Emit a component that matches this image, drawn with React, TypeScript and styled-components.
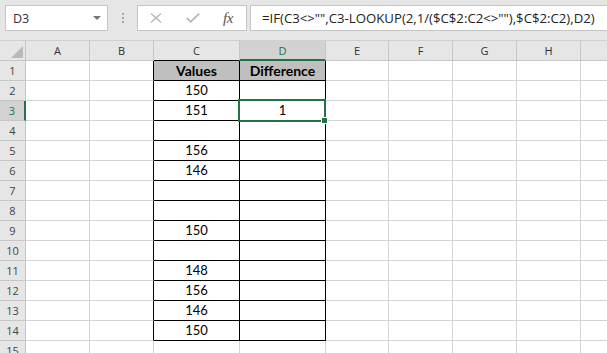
import React from 'react';
import styled, { createGlobalStyle } from 'styled-components';

const GlobalStyle = createGlobalStyle`
  html, body { margin: 0; padding: 0; background: #ffffff; overflow: hidden; }
  body { font-family: "Open Sans", sans-serif; }
`;

const GREEN = '#217346';
const GRID = '#d4d4d4';
const HEAD_LINE = '#c6c6c6';

const Page = styled.div`
  width: 607px;
  height: 353px;
  overflow: hidden;
  display: flex;
  flex-direction: column;
`;

const Toolbar = styled.div`
  box-sizing: border-box;
  flex: none;
  height: 41px;
  background: #e6e6e6;
  border-bottom: 1px solid #d0d0d0;
  display: flex;
  align-items: flex-start;
  padding: 5px 0 0 5px;
`;

const NameBox = styled.div`
  box-sizing: border-box;
  flex: none;
  width: 103px;
  height: 26px;
  background: #fff;
  border: 1px solid ${HEAD_LINE};
  display: flex;
  align-items: center;
  justify-content: space-between;
  padding: 0 6px 0 7px;
  font: 400 12.5px "Open Sans", sans-serif;
  color: #333;
`;

const Dots = styled.div`
  flex: none;
  width: 29px;
  height: 26px;
  display: flex;
  flex-direction: column;
  align-items: center;
  justify-content: center;
  gap: 2px;
`;

const Dot = styled.span`
  width: 2px;
  height: 2px;
  background: #a8a8a8;
`;

const ButtonsBox = styled.div`
  box-sizing: border-box;
  flex: none;
  width: 110px;
  height: 26px;
  background: #fff;
  border: 1px solid ${HEAD_LINE};
  display: flex;
  align-items: center;
  padding-left: 12px;
`;

const IconSlot = styled.span<{ $gap: number }>`
  display: flex;
  align-items: center;
  margin-right: ${(p) => p.$gap}px;
`;

const Fx = styled.span`
  font: italic 15px "Liberation Serif", serif;
  color: #555;
  letter-spacing: -0.5px;
  line-height: 1;
`;

const FormulaBox = styled.div`
  box-sizing: border-box;
  flex: 1;
  height: 26px;
  margin-left: 3px;
  margin-right: -3px;
  background: #fff;
  border: 1px solid ${HEAD_LINE};
  display: flex;
  align-items: center;
  padding-left: 11px;
  font: 400 13.2px "Open Sans", sans-serif;
  color: #222;
  white-space: nowrap;
  overflow: hidden;
`;

const Sheet = styled.div`
  display: grid;
  grid-template-columns: 26px 64px 64px 86px 86px 63px 64px 64px 64px 64px;
  grid-auto-rows: 20px;
`;

const Corner = styled.div`
  box-sizing: border-box;
  background: #e6e6e6;
  border-right: 1px solid ${HEAD_LINE};
  border-bottom: 1px solid ${HEAD_LINE};
  display: flex;
  justify-content: flex-end;
  align-items: flex-end;
  padding: 0 2px 2px 0;
`;

const ColHeader = styled.div<{ $sel?: boolean; $bottom?: string }>`
  box-sizing: border-box;
  background: ${(p) => (p.$sel ? '#d2d2d2' : '#e6e6e6')};
  border-right: 1px solid ${HEAD_LINE};
  border-bottom: ${(p) => (p.$sel ? `2px solid ${GREEN}` : `1px solid ${p.$bottom || HEAD_LINE}`)};
  color: ${(p) => (p.$sel ? GREEN : '#333')};
  font: 400 11px "Open Sans", sans-serif;
  line-height: 19px;
  text-align: center;
`;

const RowHeader = styled.div<{ $sel?: boolean }>`
  box-sizing: border-box;
  background: ${(p) => (p.$sel ? '#d2d2d2' : '#e6e6e6')};
  border-right: ${(p) => (p.$sel ? `2px solid ${GREEN}` : `1px solid ${HEAD_LINE}`)};
  border-bottom: 1px solid ${HEAD_LINE};
  color: ${(p) => (p.$sel ? GREEN : '#444')};
  font: 400 11px "Open Sans", sans-serif;
  line-height: 19px;
  text-align: center;
`;

const Cell = styled.div<{ $right: string; $bottom: string; $fill: string; $bold?: boolean }>`
  box-sizing: border-box;
  position: relative;
  background: ${(p) => p.$fill};
  border-right: 1px solid ${(p) => p.$right};
  border-bottom: 1px solid ${(p) => p.$bottom};
  font-family: Lato, "Open Sans", sans-serif;
  font-weight: ${(p) => (p.$bold ? 700 : 400)};
  font-size: ${(p) => (p.$bold ? '14px' : '13px')};
  line-height: 19px;
  color: #000;
  text-align: center;
  white-space: nowrap;
`;

const Selection = styled.div`
  box-sizing: border-box;
  position: absolute;
  left: -2px;
  top: -2px;
  width: 88px;
  height: 23px;
  border: 2px solid ${GREEN};
  pointer-events: none;
  z-index: 3;
`;

const FillHandle = styled.span`
  position: absolute;
  right: -3px;
  bottom: -3px;
  width: 5px;
  height: 5px;
  background: ${GREEN};
  box-shadow: 0 0 0 1px #fff;
`;

const COLS = ['A', 'B', 'C', 'D', 'E', 'F', 'G', 'H', 'I'];
const ROWS = Array.from({ length: 15 }, (_, i) => i + 1);

const DATA: Record<string, string> = {
  C1: 'Values',
  D1: 'Difference',
  C2: '150',
  C3: '151',
  D3: '1',
  C5: '156',
  C6: '146',
  C9: '150',
  C11: '148',
  C12: '156',
  C13: '146',
  C14: '150',
};

const FORMULA = '=IF(C3<>"",C3-LOOKUP(2,1/($C$2:C2<>""),$C$2:C2),D2)';

export default function App() {
  return (
    <Page>
      <GlobalStyle />
      <Toolbar>
        <NameBox>
          <span>D3</span>
          <svg width="8" height="4" viewBox="0 0 8 4">
            <path d="M0 0 L8 0 L4 4 Z" fill="#777" />
          </svg>
        </NameBox>
        <Dots>
          <Dot />
          <Dot />
          <Dot />
        </Dots>
        <ButtonsBox>
          <IconSlot $gap={24}>
            <svg width="12" height="10" viewBox="0 0 12 10">
              <path d="M1 0.5 L11 9.5 M11 0.5 L1 9.5" stroke="#b4b4b4" strokeWidth="1.3" fill="none" />
            </svg>
          </IconSlot>
          <IconSlot $gap={23}>
            <svg width="14" height="10" viewBox="0 0 14 10">
              <path d="M0.8 5 L4.6 8.8 L13.2 0.6" stroke="#b4b4b4" strokeWidth="1.7" fill="none" />
            </svg>
          </IconSlot>
          <Fx>fx</Fx>
        </ButtonsBox>
        <FormulaBox>{FORMULA}</FormulaBox>
      </Toolbar>
      <Sheet>
        <Corner>
          <svg width="12" height="12" viewBox="0 0 12 12">
            <path d="M12 0 L12 12 L0 12 Z" fill="#b9b9b9" />
          </svg>
        </Corner>
        {COLS.map((c) => (
          <ColHeader key={c} $sel={c === 'D'} $bottom={c === 'C' ? '#000' : undefined}>
            {c}
          </ColHeader>
        ))}
        {ROWS.map((r) => (
          <React.Fragment key={r}>
            <RowHeader $sel={r === 3}>{r}</RowHeader>
            {COLS.map((c, ci) => {
              const inTable = r >= 1 && r <= 14;
              const right = inTable && ci >= 1 && ci <= 3 ? '#000' : GRID;
              const bottom = inTable && (ci === 2 || ci === 3) ? '#000' : GRID;
              const head = r === 1 && (ci === 2 || ci === 3);
              const key = `${c}${r}`;
              return (
                <Cell key={key} $right={right} $bottom={bottom} $fill={head ? '#bfbfbf' : '#fff'} $bold={head}>
                  {DATA[key]}
                  {key === 'D3' && (
                    <Selection>
                      <FillHandle />
                    </Selection>
                  )}
                </Cell>
              );
            })}
          </React.Fragment>
        ))}
      </Sheet>
    </Page>
  );
}
